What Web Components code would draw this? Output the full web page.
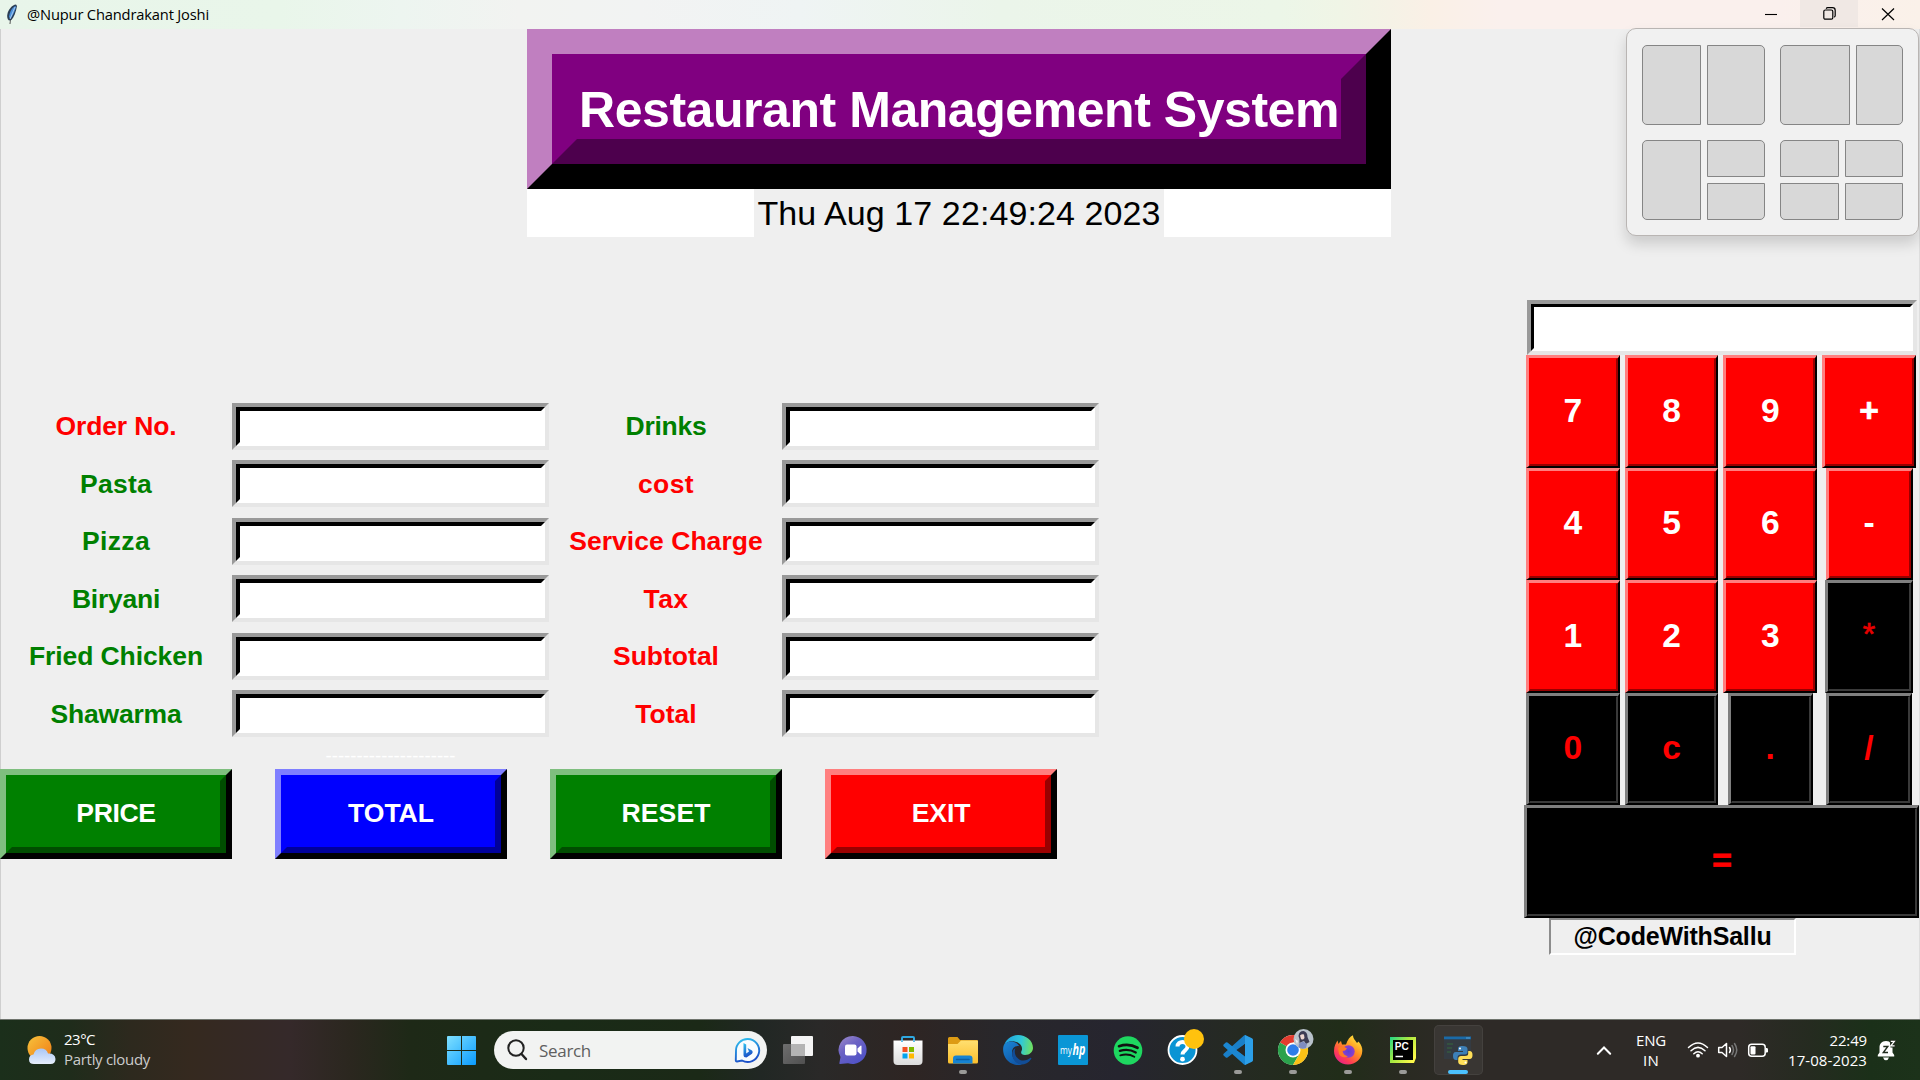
<!DOCTYPE html>
<html lang="en">
<head>
<meta charset="utf-8">
<title>@Nupur Chandrakant Joshi</title>
<style>
html,body{margin:0;padding:0}
body{width:1920px;height:1080px;overflow:hidden;background:#efefef;font-family:"Liberation Sans",Arial,sans-serif}
</style>
</head>
<body>
<desktop-screen></desktop-screen>
<script>
function define(name, html, init) {
  const t = document.createElement('template');
  t.innerHTML = html;
  customElements.define(name, class extends HTMLElement {
    constructor() { super(); this.attachShadow({mode: 'open'}).append(t.content.cloneNode(true)); }
    connectedCallback() { if (init) init(this, this.shadowRoot); }
  });
}

/* One line of text tracked so that it spans exactly `w` pixels. */
define('fit-text', `<style>
:host{display:inline-block;white-space:nowrap}
span{display:inline-block}
</style><span><slot></slot></span>`, (el, root) => {
  const w = parseFloat(el.getAttribute('w'));
  const s = root.querySelector('span');
  el.style.width = w + 'px';
  const n = el.textContent.length;
  s.style.letterSpacing = '0px';
  s.style.letterSpacing = ((w - s.getBoundingClientRect().width) / n) + 'px';
});

/* Raised two-tone bevel box. */
define('bevel-box', `<style>
:host{display:block;box-sizing:border-box;--o:6px;--i:6px;--ot:var(--o);--it:var(--i)}
.o{box-sizing:border-box;height:100%;border-style:solid;border-width:var(--ot) var(--o) var(--o) var(--ot);border-color:var(--light) #000 #000 var(--light);background:var(--face)}
.i{box-sizing:border-box;height:100%;border-style:solid;border-width:var(--it) var(--i) var(--i) var(--it);border-color:var(--face) var(--dark) var(--dark) var(--face);background:var(--face);display:flex;align-items:center;justify-content:center;white-space:nowrap}
</style><div class="o"><div class="i"><slot></slot></div></div>`);

/* Sunken entry field. */
define('tk-entry', `<style>
:host{display:block;box-sizing:border-box;width:317px;height:47px;--i:4px}
.o{box-sizing:border-box;height:100%;border:4px solid;border-color:#999 #e6e6e6 #e6e6e6 #999;background:#fff}
.i{box-sizing:border-box;height:100%;border:var(--i) solid;border-color:#000 #fff #fff #000;background:#fff}
</style><div class="o"><div class="i"></div></div>`);

define('title-bar', `<style>
:host{display:flex;height:29px;align-items:flex-start;font-family:"Open Sans","Noto Sans",sans-serif;
background:linear-gradient(90deg,#e8f5ea 0,#e9f6ea 280px,#edf5f0 400px,#f2f3f1 520px,#f2f3f3 640px,#eff4f4 800px,#ebf5ea 1000px,#ecf6e8 1280px,#f0f5e6 1340px,#f5f2e6 1390px,#faf0e6 1430px,#faf0ed 1500px,#faf0ed 1780px,#faf1e9 1920px)}
.f{width:14px;height:22px;margin:4px 8px 0 5px}
.t{font-size:14.7px;line-height:29px;color:#000;flex:1}
.b{width:58px;height:27px;display:flex;align-items:center;justify-content:center}
.b.h{background:#f0e8e4}
svg{display:block}
</style>
<svg class="f" viewBox="0 0 14 22"><path d="M4.6 20 L5.2 13 L6 13 L5.4 20Z" fill="#333"/><path d="M11 .5 C7 1 4 5 2.6 9 C1.8 12 2 15 4 16.6 L6.4 16 C9 13 11 8 12 2Z" fill="#2b3d55"/><path d="M10.4 2 C7 3.500 4.600 8 4 13 L5.500 15 C8 11 10 7 11 3Z" fill="#4a90dc"/><path d="M10 3 L5 15" stroke="#bcd6f2" stroke-width=".8"/></svg>
<div class="t"><fit-text w="182">@Nupur Chandrakant Joshi</fit-text></div>
<div class="b"><svg width="12" height="12" viewBox="0 0 12 12"><path d="M0 6.500H12" stroke="#000" stroke-width="1.1"/></svg></div>
<div class="b h"><svg width="13" height="13" viewBox="0 0 13 13" fill="none" stroke="#000" stroke-width="1.2"><rect x=".8" y="3" width="9" height="9.200" rx="1.500"/><path d="M3.200 1.700C3.500 1 4 .7 4.700 .7H9.500C11 .7 12.200 1.900 12.200 3.400V8.500C12.200 9.300 11.900 9.800 11.200 10.100"/></svg></div>
<div class="b" style="width:59px;padding-right:3px"><svg width="14" height="14" viewBox="0 0 14 14"><path d="M1 1.500L13 13M13 1.500L1 13" stroke="#000" stroke-width="1.2"/></svg></div>`);

define('app-banner', `<style>
:host{display:block;width:864px;height:208px;background:#fff}
bevel-box{height:160px;--o:25px;--i:25px;--light:#c07fc0;--face:#800080;--dark:#4d004d;color:#fff;font-weight:bold;font-size:50px}
bevel-box fit-text{margin-top:1px}
.d{display:flex;justify-content:center;height:48px}
.d div{width:410px;background:#efefef;display:flex;justify-content:center;align-items:center;font-size:34px;line-height:47px;color:#000}
</style>
<bevel-box><fit-text w="760">Restaurant Management System</fit-text></bevel-box>
<div class="d"><div><fit-text w="403">Thu Aug 17 22:49:24 2023</fit-text></div></div>`);

define('order-form', `<style>
:host{display:block;width:1100px;padding-top:160.500px}
.g{display:grid;grid-template-columns:232px 318px 232px 318px;grid-auto-rows:57.500px;align-items:center}
.l{text-align:center;font-weight:bold;font-size:26.5px;color:#008000;white-space:nowrap;padding-top:1px}
.r{color:#f00}
.s{height:26px;width:781px;display:flex;justify-content:center;font-size:18.500px;line-height:22px;color:#fff}
.s fit-text{margin-top:2px}
.b{display:flex;gap:43px}
bevel-box{width:232px;height:90px;color:#fff;font-weight:bold;font-size:26.600px}
.gr{--light:#7fbf7f;--face:#008000;--dark:#004d00}
.bl{--light:#7f7fff;--face:#0000ff;--dark:#000099}
.re{--light:#ff7f7f;--face:#ff0000;--dark:#990000}
</style>
<div class="g"></div>
<div class="s"><fit-text w="130">---------------------</fit-text></div>
<div class="b">
<bevel-box class="gr"><fit-text w="79.500">PRICE</fit-text></bevel-box>
<bevel-box class="bl"><fit-text w="86">TOTAL</fit-text></bevel-box>
<bevel-box class="gr"><fit-text w="89">RESET</fit-text></bevel-box>
<bevel-box class="re"><fit-text w="58.500">EXIT</fit-text></bevel-box>
</div>`, (el, root) => {
  const rows = [
    ['Order No.', 1, 121, 'Drinks', 0, 81], ['Pasta', 0, 72, 'cost', 1, 56],
    ['Pizza', 0, 68, 'Service Charge', 1, 193.5], ['Biryani', 0, 88, 'Tax', 1, 45],
    ['Fried Chicken', 0, 174, 'Subtotal', 1, 106], ['Shawarma', 0, 131, 'Total', 1, 61.5]];
  const l = (t, r, w) => `<div class="l${r ? ' r' : ''}"><fit-text w="${w}">${t}</fit-text></div><tk-entry></tk-entry>`;
  root.querySelector('.g').innerHTML = rows.map(r => l(r[0], r[1], r[2]) + l(r[3], r[4], r[5])).join('');
});

define('calc-pad', `<style>
:host{display:block;width:396px;padding-top:63px}
tk-entry{width:390px;height:55px;margin-left:3px;--i:3px}
.g{display:grid;grid-template-columns:98.700px 98.700px 98.700px 98.900px;grid-auto-rows:112.500px;justify-items:center;width:395px;margin-left:-.5px}
bevel-box{height:112.500px;width:93.500px;--o:2px;--i:2px;--ot:3px;--it:1px;font-weight:bold;font-size:33.600px}
bevel-box span{display:block;margin-top:-1px}
.r{--light:#ff7f7f;--face:#ff0000;--dark:#990000;color:#fff}
.k{--light:#7f7f7f;--face:#000;--dark:#3a3a3a;color:#f00}
.eq{grid-column:1/5;width:395px;margin-left:2px;-webkit-text-stroke:.9px #f00}
.plus{-webkit-text-stroke:.7px #fff}
.star{font-weight:normal;font-size:32px;color:#e80000;-webkit-text-stroke:.7px #e80000}
.star span{margin-top:-3px}
.c{box-sizing:border-box;width:247px;height:37.500px;margin-left:25px;border:2px solid;border-color:#8c8c8c #fff #fff #8c8c8c;display:flex;align-items:center;justify-content:center;font-weight:bold;font-size:25px;color:#000}
</style>
<tk-entry></tk-entry><div class="g"></div><div class="c"><fit-text w="198">@CodeWithSallu</fit-text></div>`, (el, root) => {
  const keys = [['7','r'],['8','r'],['9','r'],['+','r plus',94.5],['4','r'],['5','r'],['6','r'],['-','r',87],
    ['1','r'],['2','r'],['3','r'],['*','k star',88.5],['0','k'],['c','k'],['.','k',85.3],['/','k',85.7],['=','k eq',395]];
  root.querySelector('.g').innerHTML = keys.map(([t, c, w = 93.5]) =>
    `<bevel-box class="${c}" style="width:${w}px"><span>${t}</span></bevel-box>`).join('');
});

define('snap-popup', `<style>
:host{display:grid;position:absolute;left:1626px;top:28px;box-sizing:border-box;width:293px;height:208px;padding:16px 15px;grid-template-columns:123px 123px;grid-template-rows:80px 80px;gap:15px;border:1px solid #b9b5b3;border-radius:10px;background:#f1f1f1;box-shadow:0 8px 14px rgba(0,0,0,.15)}
.g{display:grid;column-gap:6px;row-gap:6px}
i{background:#d8d8d8;border:1px solid #858585}
.a{grid-template-columns:59px 58px}.b{grid-template-columns:70px 47px}
i{box-sizing:border-box}
.tl{border-top-left-radius:5px}.tr{border-top-right-radius:5px}.bl{border-bottom-left-radius:5px}.br{border-bottom-right-radius:5px}
.s{grid-row:1/3}
.q{grid-template-rows:37px 37px}
</style>
<div class="g a"><i class="tl bl"></i><i class="tr br"></i></div>
<div class="g b"><i class="tl bl"></i><i class="tr br"></i></div>
<div class="g a q"><i class="tl bl s"></i><i class="tr"></i><i class="br"></i></div>
<div class="g a q"><i class="tl"></i><i class="tr"></i><i class="bl"></i><i class="br"></i></div>`);

const ICONS = {
start:`<defs><linearGradient id="a" x1="0" y1="0" x2="1" y2="1"><stop offset="0" stop-color="#7fe0ff"/><stop offset="1" stop-color="#0a9bff"/></linearGradient></defs><path fill="url(#a)" d="M1 2Q1 1 2 1H15V15H1ZM16 1H29Q30 1 30 2V15H16ZM1 16H15V30H2Q1 30 1 29ZM16 16H30V29Q30 30 29 30H16Z"/>`,
task:`<defs><linearGradient id="a" x1="0" y1="0" x2="1" y2="1"><stop offset="0" stop-color="#6e6e6e"/><stop offset="1" stop-color="#505050"/></linearGradient></defs><rect x="8" y="1" width="22" height="20" rx="1" fill="#f4f4f4"/><rect x="0" y="9" width="22" height="20" rx="1" fill="url(#a)"/><path d="M8 9H22V21H8Z" fill="#b4b4b4"/>`,
chat:`<defs><linearGradient id="a" x1="0" y1="0" x2=".7" y2="1"><stop offset="0" stop-color="#a08cc8"/><stop offset=".45" stop-color="#6b62c4"/><stop offset="1" stop-color="#4f52c8"/></linearGradient></defs><path d="M15 1A14 14 0 1 1 10 28.200L2 29Q1 29 1.400 28L2.500 22A14 14 0 0 1 15 1Z" fill="url(#a)"/><rect x="7" y="9.500" width="11.500" height="11" rx="2" fill="#fff"/><path d="M19.500 13.500L22.500 10.800Q23.500 10.200 23.500 11.500V18.500Q23.500 19.800 22.500 19.200L19.500 16.500Z" fill="#fff"/>`,
store:`<defs><linearGradient id="a" x1="0" y1="0" x2="0" y2="1"><stop offset="0" stop-color="#fff"/><stop offset="1" stop-color="#dcdcdc"/></linearGradient></defs><path d="M9 6V3Q9 2 10 2H20Q21 2 21 3V6" fill="none" stroke="#2fa8e0" stroke-width="2"/><path d="M.5 5.500H29.500V26Q29.500 30 25.500 30H4.500Q.5 30 .5 26Z" fill="url(#a)"/><path d="M9 5.500V7M21 5.500V7" stroke="#2fa8e0" stroke-width="1.500"/><path d="M9.500 12H14.500V17H9.500Z" fill="#f25022"/><path d="M16 12H21V17H16Z" fill="#7fba00"/><path d="M9.500 18.500H14.500V23.500H9.500Z" fill="#00a4ef"/><path d="M16 18.500H21V23.500H16Z" fill="#ffb900"/>`,
files:`<defs><linearGradient id="a" x1="0" y1="0" x2="0" y2="1"><stop offset="0" stop-color="#ffdf70"/><stop offset="1" stop-color="#fbbf2d"/></linearGradient></defs><path d="M0 3.500Q0 2 1.500 2H9.500L12 5H29Q30 5 30 6V14H0Z" fill="#dd9b14"/><path d="M0 9H9.500L13 5.500H29Q30 5.500 30 6.500V27Q30 28.500 28.500 28.500H1.500Q0 28.500 0 27Z" fill="url(#a)"/><path d="M5 28.500V23.500Q5 20.500 8 20.500H21.500Q24.500 20.500 24.500 23.500V28.500Z" fill="#1683d2"/><path d="M8.500 24.500H21" stroke="#0b5fa5" stroke-width="1.500" stroke-linecap="round"/>`,
edge:`<defs><linearGradient id="a" x1="0" y1=".3" x2="1" y2=".4"><stop offset="0" stop-color="#1f9fe0"/><stop offset=".6" stop-color="#30c8d8"/><stop offset="1" stop-color="#6fe060"/></linearGradient><linearGradient id="b" x1="0" y1="0" x2=".6" y2="1"><stop offset="0" stop-color="#1a86d6"/><stop offset="1" stop-color="#1058a8"/></linearGradient></defs><path d="M15 0A15 15 0 0 0 .5 12C2 7.500 7 5.500 11.500 6.500C17 7.500 20.500 12 18.500 16C17.500 18 18.500 20 22 20C27 20 30 16.500 30 13C30 5.500 23 0 15 0Z" fill="url(#a)"/><path d="M.3 12C2 7 7 5.800 11 7C14 8 16 10 16 11C11 10.500 9 14 9 17.500C9 23 13 28.500 19 29.400C17 30.200 14 30.200 12 29.700C4 28 -1 20 .3 12Z" fill="url(#b)"/><path d="M12.500 13C11 16 11.500 22 17 25C21 26.500 25 25 27.500 22.800Q29 22.500 28 24.200C25.500 28 22 29.500 18.500 29.500C12 28.500 8 22 9.500 16.500Q10.300 14 12.500 13Z" fill="#124d96"/>`,
hp:`<rect width="30" height="30" rx="1" fill="#0a96d6"/><text x="2" y="18.500" font-family="Open Sans,sans-serif" font-size="11" fill="#fff" textLength="12" lengthAdjust="spacingAndGlyphs">my</text><text x="14.500" y="19.500" font-family="Open Sans,sans-serif" font-weight="bold" font-style="italic" font-size="15.500" fill="#fff" textLength="13" lengthAdjust="spacingAndGlyphs">hp</text>`,
spotify:`<circle cx="15" cy="15.500" r="14.300" fill="#1ed760"/><g fill="none" stroke="#111" stroke-linecap="round"><path d="M6 11.200C12 9.300 19.500 10 24.500 12.800" stroke-width="2.700"/><path d="M6.800 15.900C12 14.300 18.500 15 22.800 17.500" stroke-width="2.200"/><path d="M7.300 20.300C12 19 17.500 19.500 21.300 21.800" stroke-width="1.900"/></g>`,
help:`<circle cx="14.500" cy="15" r="14" fill="#0a94d4" stroke="#fff" stroke-width="1.800"/><path d="M9.500 11.500C9.500 5.500 19.500 5.500 19.500 11.500C19.500 15.500 14.500 15.500 14.500 19.500" fill="none" stroke="#fff" stroke-width="4"/><circle cx="14.500" cy="24.200" r="2.400" fill="#fff"/><circle cx="26" cy="4" r="10" fill="#ffc20e"/>`,
code:`<path d="M22 0L30 5V9H22L4.500 22.500Q3.500 23 2.800 22.400L.6 20.400Q-.2 19.600 .6 18.800L21 .5Z" fill="#1a7fc8"/><path d="M22 30L30 25V20L22 21.500L4.500 7.500Q3.500 7 2.800 7.600L.6 9.600Q-.2 10.400 .6 11.200L21 29.500Z" fill="#1b87d2"/><path d="M22 9V21L13.500 15Z" fill="#272827"/><path d="M22 0L29 3.300Q30 3.800 30 5V25Q30 26.200 29 26.700L22 30Z" fill="#2c9fe8"/>`,
chrome:`<circle cx="15" cy="15" r="15" fill="#fff"/><path d="M15 15L2 7.500A15 15 0 0 1 28 7.500H15Z" fill="#e33b2e"/><path d="M15 15L2 7.500A15 15 0 0 0 15 30L21.500 18.700Z" fill="#2ba24c"/><path d="M15 7.500H28A15 15 0 0 1 15 30L21.500 18.700Z" fill="#fbc116"/><circle cx="15" cy="15" r="7.500" fill="#fff"/><circle cx="15" cy="15" r="5.800" fill="#2f7de9"/><circle cx="25.500" cy="4" r="10" fill="#b9c2cb"/><path d="M20.500 1Q21 -4 25.500 -4Q29.500 -3 29.500 2L31.500 7L28 9L26 6L21.500 8Q22 4 20.500 1Z" fill="#3d3c54"/><path d="M22 .5Q24 -1.500 26 -.5L26.500 3Q25 5.500 23 4Z" fill="#ecd6d0"/><path d="M21 8.500L25 6.500L29 9L28 13Q24 14.500 20.500 12.500Z" fill="#7f8cc0"/><path d="M17 4L20 6L19 9Z" fill="#f3eef0"/>`,
firefox:`<defs><linearGradient id="a" x1=".85" y1=".1" x2=".2" y2="1"><stop offset="0" stop-color="#ffe03a"/><stop offset=".4" stop-color="#ff9020"/><stop offset=".75" stop-color="#ff3b56"/><stop offset="1" stop-color="#e0208c"/></linearGradient><radialGradient id="b"><stop offset="0" stop-color="#5a3fd8"/><stop offset="1" stop-color="#9140c8"/></radialGradient></defs><path d="M15 29.500C7 29.500 1 23.500 1 16C1 11 3 8 4.500 5.500L5.500 9Q7 6.500 8 6L9 9.500H13C14.500 5 17 1.500 20 .3C20 4 23 6 24 8L25.500 6.500C28.500 10 29.500 13 29.300 16C29 24 22.500 29.500 15 29.500Z" fill="url(#a)"/><circle cx="15.500" cy="16.500" r="6.200" fill="url(#b)"/><path d="M5 13Q9 10 14 13.500Q12.500 16 9.500 16Q10 20 15 21.500Q9 24 6 19Z" fill="#ff7a25"/>`,
pycharm:`<defs><linearGradient id="a" x1="0" y1="0" x2="1" y2=".7"><stop offset="0" stop-color="#21d789"/><stop offset=".5" stop-color="#a8e840"/><stop offset="1" stop-color="#fcf84a"/></linearGradient></defs><path d="M2 2H28V23L26 28H2Z" fill="url(#a)"/><rect x="5" y="5" width="20" height="20" fill="#000"/><text x="6.700" y="14.800" font-family="Liberation Sans,sans-serif" font-weight="bold" font-size="10.500" fill="#fff" textLength="14" lengthAdjust="spacingAndGlyphs">PC</text><path d="M7.500 21.500H15" stroke="#fff" stroke-width="1.500"/>`,
python:`<rect x="1" y="2" width="27" height="22" fill="#343b42"/><path d="M1 1.500H28V4.300H1Z" fill="#1a6aa8"/><path d="M23 3H27" stroke="#6cb0dc" stroke-width=".8"/><path d="M4 9H10M4 13H9M4 17H8" stroke="#34693c" stroke-width="1.200"/><path d="M19.500 11C16 11 15 12 15 14V16H20V17H13C10.500 17 10 19 10 21C10 23.500 11 25 13 25H14.500V22.500C14.500 20.500 16 19.500 18 19.500H22C23.500 19.500 24.500 18.500 24.500 17V14C24.500 12 23 11 19.500 11Z" fill="#3d80b8"/><path d="M20 30C23.500 30 24.500 29 24.500 27V25H19.500V24H26.500C29 24 29.500 22 29.500 20C29.500 17.500 28.500 16 26.500 16H25.200V18.500C25.200 20.300 24 21 22 21H18C16.500 21 15.200 22 15.200 24V27C15.200 29 17 30 20 30Z" fill="#ffdf58"/><circle cx="17" cy="13.500" r="1" fill="#fff"/><circle cx="22.500" cy="27.500" r="1" fill="#fff"/>`,
weather:`<defs><linearGradient id="a" x1="0" y1="0" x2="1" y2="1"><stop offset="0" stop-color="#f7c33c"/><stop offset="1" stop-color="#f07a14"/></linearGradient><linearGradient id="b" x1="0" y1="0" x2="0" y2="1"><stop offset="0" stop-color="#a9c6f5"/><stop offset="1" stop-color="#e6eefc"/></linearGradient></defs><circle cx="13.500" cy="13" r="12" fill="url(#a)"/><path d="M8 29Q3 29 3 24.500Q3 20 7.500 19.500Q9 13.500 15 13.500Q20.500 13.500 22 18.500Q29 18 29.500 24Q29.500 29 24.500 29Z" fill="url(#b)"/>`,
search:`<circle cx="14" cy="13" r="7.700" fill="none" stroke="#222" stroke-width="2"/><path d="M19.500 19L24 24" stroke="#222" stroke-width="2.400" stroke-linecap="round"/>`,
bing:`<defs><linearGradient id="a" x1="0" y1="0" x2=".3" y2="1"><stop offset="0" stop-color="#2fc4f0"/><stop offset="1" stop-color="#1b50c8"/></linearGradient></defs><path d="M15.500 4A11.500 11.500 0 1 1 10 25.500L5 26.500Q3.600 26.500 3.800 25L4 15.500A11.500 11.500 0 0 1 15.500 4Z" fill="#f8fcff" stroke="url(#a)" stroke-width="1.900"/><path d="M11.500 8L14.200 9.500V18.500L17 16.500L15.500 13L20 15.500Q21.500 17 20 18.800L14.500 22.500Q11.500 22.500 11.500 20Z" fill="url(#a)"/>`,
chevron:`<path d="M8.800 18.800L15 12.500L21.200 18.800" fill="none" stroke="#fff" stroke-width="2" stroke-linecap="round"/>`,
wifi:`<g fill="none" stroke="#fff" stroke-width="1.500" stroke-linecap="round"><path d="M5.500 12.500Q15 3.500 24.500 12.500M8 15.700Q15 9 22 15.700M10.800 18.700Q15 14.700 19.200 18.700"/></g><circle cx="15" cy="20.700" r="1.900" fill="#fff"/>`,
sound:`<g fill="none" stroke="#fff" stroke-width="1.500" stroke-linecap="round" stroke-linejoin="round"><path d="M5.700 12.500H9L13.500 8.500V21.500L9 17.500H5.700Z"/><path d="M16.500 12.500Q18.300 15 16.500 17.500"/><path d="M19 10.500Q22 15 19 19.500M21.500 8.500Q26 15 21.500 21.500" stroke="#777"/></g>`,
battery:`<rect x="5.700" y="9.300" width="16.500" height="12" rx="3" fill="none" stroke="#fff" stroke-width="1.500"/><rect x="7.500" y="11.200" width="5" height="8.200" rx="1" fill="#fff"/><path d="M23 13H24Q25 13.200 25 14.300V16.300Q25 17.400 24 17.600H23Z" fill="#fff"/>`,
bell:`<path d="M14 6C9.500 6 7.500 9 7.500 12.500V17.500L5.800 20V21.500H22.200V20L20.500 17.500V12.500C20.500 9 18.500 6 14 6ZM11 22.500H17Q16 25.300 14 25.300Q12 25.300 11 22.500Z" fill="#fff"/><path d="M17.500 4.500H24V12.500H18.500Z" fill="#212c1e"/><path d="M18.800 6.300H22.300L18.800 10.800H22.600" fill="none" stroke="#fff" stroke-width="1.300"/><path d="M11.300 11.500H15.800L11.300 17.500H16" fill="none" stroke="#212c1e" stroke-width="1.400"/>`
};
define('app-icon', `<style>:host{display:block;width:30px;height:30px;flex:none}svg{display:block;overflow:visible}</style><svg width="30" height="30" viewBox="0 0 30 30"></svg>`,
  (el, root) => { root.querySelector('svg').innerHTML = ICONS[el.getAttribute('name')]; });

define('task-item', `<style>
:host{display:flex;width:55px;height:60px;flex:none;justify-content:center;align-items:center}
.c{box-sizing:border-box;width:49px;height:50px;border-radius:5px;display:flex;flex-direction:column;align-items:center;padding-top:10px}
:host([active]) .c{background:#393633;box-shadow:inset 0 0 0 1px #44413e}
.m{width:8px;height:4px;border-radius:2px;margin-top:5px}
:host([open]) .m{background:#9a9a98}
:host([active]) .m{background:#4cc2ff;width:20px}
</style><div class="c"><slot></slot><div class="m"></div></div>`);

define('task-bar', `<style>
:host{display:flex;box-sizing:border-box;height:61px;border-top:1px solid #6f746d;color:#fff;align-items:center;font-family:"Open Sans","Noto Sans",sans-serif;font-size:15px;
background:linear-gradient(90deg,#1b2f1b 0,#1f2c1b 70px,#2d291e 130px,#35291f 190px,#35292a 290px,#2b271f 350px,#1e2917 410px,#1a2b17 560px,#1b2917 700px,#212724 760px,#2a2928 820px,#2e2523 910px,#28272b 1000px,#26252f 1120px,#252a22 1240px,#212d19 1340px,#292a21 1400px,#2e2a27 1470px,#2e2a27 1740px,#252b20 1810px,#1b3019 1870px,#1c321a 1920px)}
.w{display:flex;align-items:center;width:421px;padding-left:26px;gap:8px}
.w .x{line-height:20px;display:flex;flex-direction:column;padding-bottom:2px}
.x .g{color:#ccc}
.s{box-sizing:border-box;width:273px;height:38px;border-radius:19px;background:#f2f3f2;display:flex;align-items:center;padding:0 5px 0 8px;margin:0 3.500px 0 4.500px;color:#5f5f5f;font-size:17px}
.s div{flex:1;padding-left:7px}
.tray{display:flex;align-items:center;margin-left:auto;line-height:20px;padding-right:19px}
.e{width:60px;display:flex;flex-direction:column;align-items:center;margin:0 6px 0 3px}
.d{display:flex;flex-direction:column;align-items:flex-end;width:94px;margin-right:5px}
</style>
<div class="w"><app-icon name="weather"></app-icon><div class="x"><fit-text w="31">23°C</fit-text><fit-text class="g" w="86">Partly cloudy</fit-text></div></div>
<app-icon name="start" style="margin:0 13.500px 0 -1px"></app-icon>
<div class="s"><app-icon name="search"></app-icon><div><fit-text w="52">Search</fit-text></div><app-icon name="bing"></app-icon></div>
<task-item><app-icon name="task"></app-icon></task-item>
<task-item><app-icon name="chat"></app-icon></task-item>
<task-item><app-icon name="store"></app-icon></task-item>
<task-item open><app-icon name="files"></app-icon></task-item>
<task-item><app-icon name="edge"></app-icon></task-item>
<task-item><app-icon name="hp"></app-icon></task-item>
<task-item><app-icon name="spotify"></app-icon></task-item>
<task-item><app-icon name="help"></app-icon></task-item>
<task-item open><app-icon name="code"></app-icon></task-item>
<task-item open><app-icon name="chrome"></app-icon></task-item>
<task-item open><app-icon name="firefox"></app-icon></task-item>
<task-item open><app-icon name="pycharm"></app-icon></task-item>
<task-item open active><app-icon name="python"></app-icon></task-item>
<div class="tray"><app-icon name="chevron" style="margin-right:-1px"></app-icon>
<div class="e" style="margin-right:2px"><fit-text w="30">ENG</fit-text><fit-text w="16">IN</fit-text></div>
<app-icon name="wifi"></app-icon><app-icon name="sound"></app-icon><app-icon name="battery"></app-icon>
<div class="d"><fit-text w="37.500">22:49</fit-text><fit-text w="79">17-08-2023</fit-text></div>
<app-icon name="bell" style="margin-right:-1px"></app-icon></div>`);

define('desktop-screen', `<style>
:host{display:flex;flex-direction:column;width:1920px;height:1080px;position:relative;overflow:hidden}
.c{height:990px;background:#efefef;box-shadow:inset 1px 0 0 #cfcfcf,inset -1px 0 0 #dedede}
app-banner{margin-left:527px}
.b{display:flex;justify-content:space-between;height:782px}
</style>
<title-bar></title-bar>
<div class="c"><app-banner></app-banner><div class="b"><order-form></order-form><calc-pad></calc-pad></div></div>
<task-bar></task-bar>
<snap-popup></snap-popup>`);
</script>
</body>
</html>
